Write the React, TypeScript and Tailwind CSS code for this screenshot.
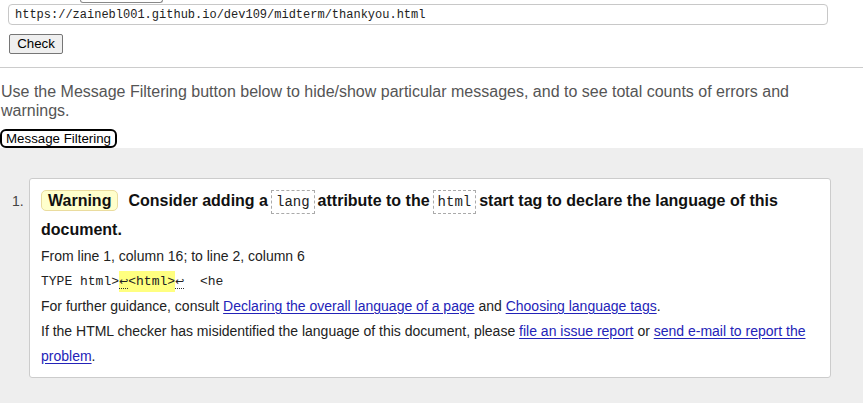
import React from 'react';

const sans = "font-['Liberation_Sans',Arial,sans-serif]";
const mono = "font-['Liberation_Mono','DejaVu_Sans_Mono',monospace]";

const Code: React.FC<{ children: React.ReactNode }> = ({ children }) => (
  <code
    className={`${mono} mx-[3px] inline-block border border-dashed border-[#aaa] px-[4px] text-[14px] font-normal leading-[22px] text-[#222]`}
  >
    {children}
  </code>
);

const Link: React.FC<{ children: React.ReactNode }> = ({ children }) => (
  <a href="#" className="text-[#2323b8] underline underline-offset-2">
    {children}
  </a>
);

const Marker: React.FC = () => (
  <span className="border-b border-dotted border-[#333] font-['DejaVu_Sans',sans-serif] text-[11px]">↩</span>
);

export default function App() {
  return (
    <div className={`${sans} min-h-[403px] bg-white text-[#222]`}>
      {/* bottom of a button cut off above */}
      <div className="ml-[80px] h-[3px] w-[83px] rounded-b-[3px] border-x border-b border-[#888]" />

      <div className="pl-[8px] pt-[1px]">
        <div
          className={`${mono} flex h-[21px] w-[820px] items-center rounded-[4px] border border-[#c8c8c8] px-[6px] text-[12px] text-[#222]`}
        >
          https://zainebl001.github.io/dev109/midterm/thankyou.html
        </div>
        <button className="ml-[1px] mt-[9px] flex h-[20px] w-[54px] items-center justify-center rounded-[2px] border border-[#767676] bg-[#efefef] text-[13.3px] text-black">
          Check
        </button>
      </div>

      <hr className="mt-[13px] border-t border-[#ccc]" />

      <p className="mt-[15px] max-w-[800px] pl-[1px] text-[16px] leading-[18.5px] text-[#555]">
        Use the Message Filtering button below to hide/show particular messages, and to see total counts of errors and
        warnings.
      </p>

      <button className="mt-[9px] flex h-[19px] w-[117px] items-center justify-center rounded-[6px] border-2 border-black bg-white text-[13.3px] leading-none text-black">
        Message Filtering
      </button>

      <div className="bg-[#eeeeee] pb-[30px] pt-[30px]">
        <div className="flex">
          <div className="w-[29px] pl-[12px] pt-[13px] text-[14px] text-[#444]">1.</div>
          <div className="w-[802px] rounded-[3px] border border-[#ccc] bg-white px-[11px] pb-[8px] pt-[7px]">
            <p className="text-[16px] font-bold leading-[29px] text-[#111]">
              <span className="mr-[10px] inline-block rounded-[5px] border border-[#eadc9e] bg-[#ffffcc] px-[6px] leading-[19px]">
                Warning
              </span>
              Consider adding a<Code>lang</Code>attribute to the<Code>html</Code>start tag to declare the language of this
              document.
            </p>
            <p className="text-[14px] leading-[25px]">From line 1, column 16; to line 2, column 6</p>
            <p className={`${mono} text-[13px] leading-[25px] text-[#222]`}>
              TYPE html&gt;
              <span className="bg-[#ffff80] py-[3px]">
                <Marker />
                &lt;html&gt;
              </span>
              <Marker />
              {'\u00a0\u00a0'}&lt;he
            </p>
            <p className="text-[14px] leading-[25px]">
              For further guidance, consult <Link>Declaring the overall language of a page</Link> and{' '}
              <Link>Choosing language tags</Link>.
            </p>
            <p className="text-[14px] leading-[25px]">
              If the HTML checker has misidentified the language of this document, please <Link>file an issue report</Link>{' '}
              or <Link>send e-mail to report the problem</Link>.
            </p>
          </div>
        </div>
      </div>
    </div>
  );
}
